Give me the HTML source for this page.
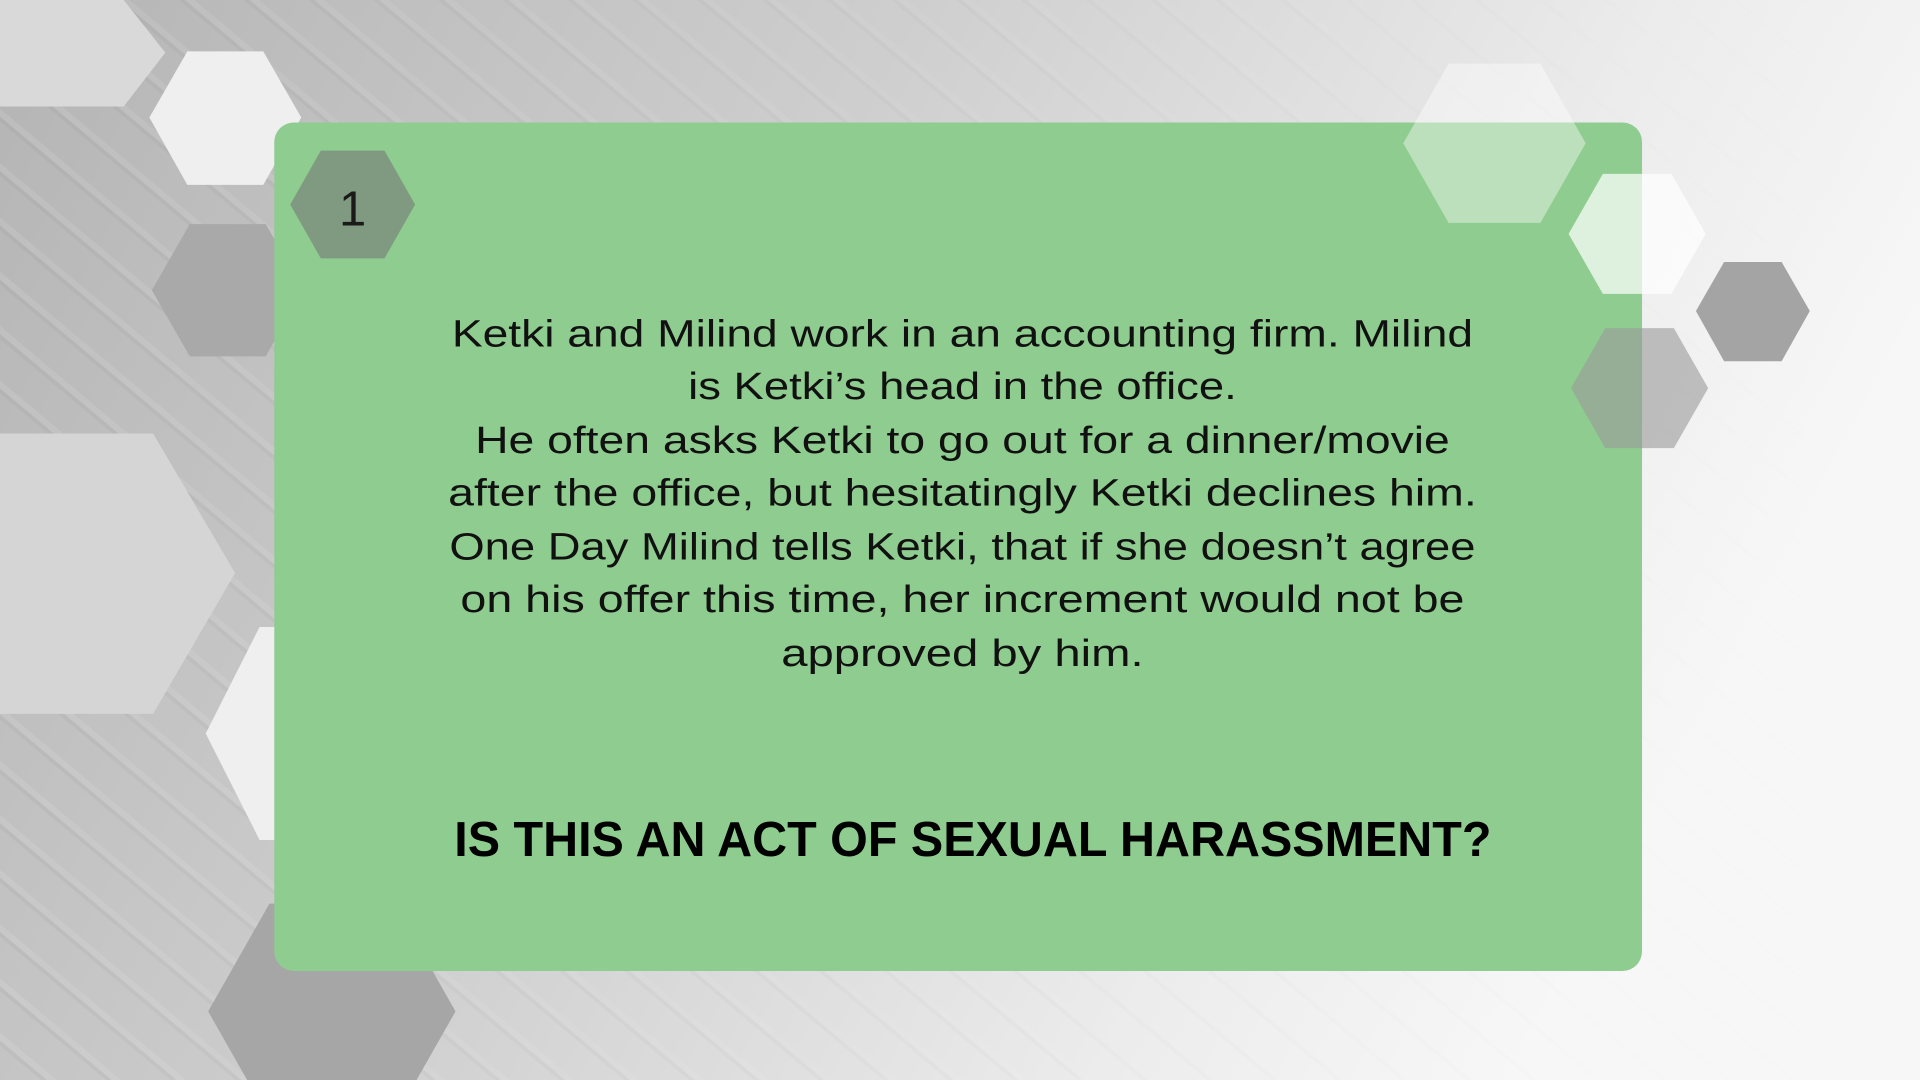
<!DOCTYPE html>
<html><head><meta charset="utf-8"><style>
html,body{margin:0;padding:0;width:1920px;height:1080px;overflow:hidden;background:#ddd}
svg{display:block}
</style></head><body>
<svg width="1920" height="1080" viewBox="0 0 1568 882" preserveAspectRatio="none" xmlns="http://www.w3.org/2000/svg">
<defs>
<linearGradient id="bg" x1="0" y1="0" x2="1" y2="0.3">
<stop offset="0" stop-color="#b4b4b4"/>
<stop offset="0.45" stop-color="#cfcfcf"/>
<stop offset="0.8" stop-color="#ececec"/>
<stop offset="1" stop-color="#f7f7f7"/>
</linearGradient>
<pattern id="st" width="34" height="34" patternUnits="userSpaceOnUse" patternTransform="rotate(40)">
<rect width="34" height="34" fill="none"/>
<rect width="34" height="5" fill="#ffffff" opacity="0.1"/>
<rect y="5" width="34" height="3" fill="#000" opacity="0.03"/>
</pattern>
<linearGradient id="fade" x1="0" x2="1">
<stop offset="0" stop-color="#fff" stop-opacity="1"/>
<stop offset="0.6" stop-color="#fff" stop-opacity="0.4"/>
<stop offset="1" stop-color="#fff" stop-opacity="0"/>
</linearGradient>
<mask id="m"><rect width="1568" height="882" fill="url(#fade)"/></mask>
</defs>
<rect width="1568" height="882" fill="url(#bg)"/>
<rect width="1568" height="882" fill="url(#st)" mask="url(#m)"/>
<polygon points="-34,43 0,0 101,0 135,43 101,87 0,87" fill="#d9d9d9"/>
<polygon points="122,96 153,42 215,42 246,96 215,151 153,151" fill="#efefef"/>
<polygon points="124,237 155,183 217,183 248,237 217,291 155,291" fill="#a9a9a9"/>
<polygon points="-48,468 0,354 125,354 192,468 125,583 0,583" fill="#d5d5d5"/>
<polygon points="168,599 212,512 260,512 300,599 260,686 212,686" fill="#efefef"/>
<polygon points="170,826 220,738 322,738 372,826 322,914 220,914" fill="#a6a6a6"/>
<rect x="224" y="100" width="1117" height="693" rx="16" fill="#8fcc8f"/>
<polygon points="1146,117 1183,52 1258,52 1295,117 1258,182 1183,182" fill="#ffffff" fill-opacity="0.4"/>
<polygon points="1281,191 1309,142 1365,142 1393,191 1365,240 1309,240" fill="#ffffff" fill-opacity="0.7"/>
<polygon points="1385,254 1408,214 1455,214 1478,254 1455,295 1408,295" fill="#a4a4a4"/>
<polygon points="1283,317 1311,268 1367,268 1395,317 1367,366 1311,366" fill="#9a9a9a" fill-opacity="0.6"/>
<polygon points="237,167 262,123 314,123 339,167 314,211 262,211" fill="#7f9a80"/>
<text x="288" y="184" font-family="Liberation Sans, sans-serif" font-size="40" text-anchor="middle" fill="#1a1a1a">1</text>
<g font-family="Liberation Sans, sans-serif" font-size="31" fill="#111" lengthAdjust="spacingAndGlyphs">
<text x="369" y="283" textLength="834" lengthAdjust="spacingAndGlyphs">Ketki and Milind work in an accounting firm. Milind</text>
<text x="562" y="326" textLength="448" lengthAdjust="spacingAndGlyphs">is Ketki’s head in the office.</text>
<text x="388" y="370" textLength="796" lengthAdjust="spacingAndGlyphs">He often asks Ketki to go out for a dinner/movie</text>
<text x="366" y="413" textLength="840" lengthAdjust="spacingAndGlyphs">after the office, but hesitatingly Ketki declines him.</text>
<text x="367" y="457" textLength="838" lengthAdjust="spacingAndGlyphs">One Day Milind tells Ketki, that if she doesn’t agree</text>
<text x="376" y="500" textLength="820" lengthAdjust="spacingAndGlyphs">on his offer this time, her increment would not be</text>
<text x="638" y="544" textLength="296" lengthAdjust="spacingAndGlyphs">approved by him.</text>
</g>
<text x="371" y="699" font-family="Liberation Sans, sans-serif" font-size="40" font-weight="bold" fill="#000" textLength="847" lengthAdjust="spacingAndGlyphs">IS THIS AN ACT OF SEXUAL HARASSMENT?</text>
</svg>
</body></html>
